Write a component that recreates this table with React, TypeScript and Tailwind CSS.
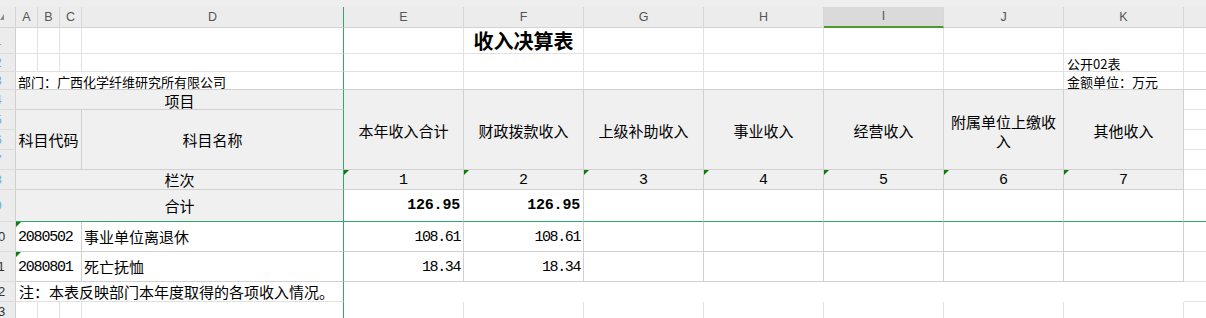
import React from 'react';

// excel-ish sheet: 收入决算表
const CJK = "font-['Noto_Sans_CJK_SC',sans-serif]";
const MONO = "font-['Liberation_Mono','Noto_Sans_CJK_SC',monospace]";

const light = 'border-r border-b border-r-[#e1e1e1] border-b-[#e1e1e1]';
const lightD = 'border-r border-b border-r-[#35a56f] border-b-[#e1e1e1]';
const tbl = 'border-r border-b border-r-[#d0d0d0] border-b-[#d0d0d0] bg-[#f0f0f0]';
const tblD = 'border-r border-b border-r-[#35a56f] border-b-[#d0d0d0] bg-[#f0f0f0]';
const edge = 'border-b border-b-[#e1e1e1]';

const LETTERS = ['A', 'B', 'C', 'D', 'E', 'F', 'G', 'H', 'I', 'J', 'K'];
const HEADS = ['本年收入合计', '财政拨款收入', '上级补助收入', '事业收入', '经营收入', '附属单位上缴收入', '其他收入'];

const Tri = () => (
  <div className="absolute left-0 top-0 w-0 h-0 border-t-[5px] border-r-[5px] border-t-[#0b7d0b] border-r-transparent" />
);

function RowNum({ n }: { n: number }) {
  return (
    <div className="overflow-hidden flex items-center bg-[#ececec] border-r border-b border-r-[#d0d0d0] border-b-[#dcdcdc]">
      <div
        className={`shrink-0 w-[32px] -ml-[18px] text-center text-[13px] font-['Liberation_Sans',sans-serif] ${
          n < 10 ? 'text-[#6aaee0]' : 'text-[#333]'
        }`}
      >
        {n}
      </div>
    </div>
  );
}

function Empty({ n }: { n: number }) {
  return (
    <>
      {Array.from({ length: n }).map((_, i) => (
        <div key={i} className={light} />
      ))}
    </>
  );
}

export default function App() {
  return (
    <div className={`w-[1206px] h-[318px] overflow-hidden bg-white text-black ${CJK}`}>
      <div className="grid w-[1207px] grid-cols-[16px_22px_22px_22px_262px_120px_120px_120px_120px_120px_120px_120px_23px] grid-rows-[7px_21px_26px_18px_18px_20px_20px_20px_20px_20px_32px_30px_30px_20px_20px]">
        {/* top strip */}
        <div className="col-span-13 bg-[#eeeeee]" />

        {/* column letters */}
        <div className="relative bg-[#ececec] border-r border-b border-r-[#d4d4d4] border-b-[#d4d4d4]">
          <div className="absolute left-0 top-[7px] w-0 h-0 border-b-[6px] border-l-[4px] border-b-[#8a8a8a] border-l-transparent" />
        </div>
        {LETTERS.map((l) => (
          <div
            key={l}
            className={`flex items-center justify-center text-[12.5px] text-[#555] font-['Liberation_Sans',sans-serif] border-r ${
              l === 'I'
                ? 'bg-[#dadada] border-b-2 border-b-[#4a9b2e] border-r-[#d8d8d8]'
                : l === 'D'
                ? 'bg-[#ececec] border-b border-b-[#d4d4d4] border-r-[#35a56f]'
                : 'bg-[#ececec] border-b border-b-[#d4d4d4] border-r-[#d8d8d8]'
            }`}
          >
            {l}
          </div>
        ))}
        <div className="bg-[#ececec] border-b border-b-[#d4d4d4]" />

        {/* row 1 */}
        <RowNum n={1} />
        <Empty n={3} />
        <div className={lightD} />
        <div className={light} />
        <div className={`${light} flex items-center justify-center text-[20px] font-bold leading-none`}>收入决算表</div>
        <Empty n={5} />
        <div className={edge} />

        {/* row 2 */}
        <RowNum n={2} />
        <Empty n={3} />
        <div className={lightD} />
        <Empty n={6} />
        <div className={`${light} flex items-end pl-[3px] text-[13px] leading-[14px] whitespace-nowrap`}>公开02表</div>
        <div className={edge} />

        {/* row 3 */}
        <RowNum n={3} />
        <div className="col-span-4 flex items-end pl-[2px] text-[13px] leading-[14px] whitespace-nowrap border-r border-b border-r-[#35a56f] border-b-[#d0d0d0]">
          部门：广西化学纤维研究所有限公司
        </div>
        {Array.from({ length: 6 }).map((_, i) => (
          <div key={i} className="border-r border-b border-r-[#e1e1e1] border-b-[#d0d0d0]" />
        ))}
        <div className="flex items-end pl-[3px] text-[13px] leading-[14px] whitespace-nowrap border-r border-b border-r-[#e1e1e1] border-b-[#d0d0d0]">
          金额单位：万元
        </div>
        <div className="border-b border-b-[#d0d0d0]" />

        {/* rows 4-7 header */}
        <RowNum n={4} />
        <div className={`${tblD} col-span-4 flex items-center justify-center pt-[2px] text-[15px] leading-none`}>项目</div>
        {HEADS.map((h) => (
          <div
            key={h}
            className={`${tbl} row-span-4 flex items-center justify-center px-[5px] pt-[2px] text-center text-[15px] leading-[19px]`}
          >
            {h}
          </div>
        ))}
        <div className={edge} />

        <RowNum n={5} />
        <div className={`${tbl} col-span-3 row-span-3 flex items-center justify-center text-[15px] leading-none whitespace-nowrap`}>
          科目代码
        </div>
        <div className={`${tblD} row-span-3 flex items-center justify-center text-[15px] leading-none`}>科目名称</div>
        <div className={edge} />

        <RowNum n={6} />
        <div className={edge} />

        <RowNum n={7} />
        <div className={edge} />

        {/* row 8 栏次 */}
        <RowNum n={8} />
        <div className={`${tblD} col-span-4 flex items-center justify-center text-[15px] leading-none`}>栏次</div>
        {[1, 2, 3, 4, 5, 6, 7].map((n) => (
          <div key={n} className={`${tbl} relative flex items-center justify-center pt-[2px] text-[15px] leading-none ${MONO}`}>
            <Tri />
            {n}
          </div>
        ))}
        <div className={edge} />

        {/* row 9 合计 */}
        <RowNum n={9} />
        <div className="col-span-4 flex items-center justify-center text-[15px] leading-none bg-[#f0f0f0] border-r border-b border-r-[#35a56f] border-b-[#35a56f]">
          合计
        </div>
        {['126.95', '126.95', '', '', '', '', ''].map((v, i) => (
          <div
            key={i}
            className={`flex items-center justify-end pr-[3px] text-[15px] font-bold tracking-[-0.2px] leading-none border-r border-b border-r-[#d0d0d0] border-b-[#35a56f] ${MONO}`}
          >
            {v}
          </div>
        ))}
        <div className="border-b border-b-[#35a56f]" />

        {/* rows 10-11 data */}
        {[
          { n: 10, code: '2080502', name: '事业单位离退休', a: '108.61', b: '108.61' },
          { n: 11, code: '2080801', name: '死亡抚恤', a: '18.34', b: '18.34' },
        ].map((r) => (
          <React.Fragment key={r.n}>
            <RowNum n={r.n} />
            <div
              className={`relative col-span-3 flex items-center pl-[2px] pt-[1px] text-[15px] tracking-[-1.2px] leading-none border-r border-b border-r-[#d0d0d0] border-b-[#d0d0d0] ${MONO}`}
            >
              <Tri />
              {r.code}
            </div>
            <div className="flex items-center pl-[2px] text-[15px] leading-none border-r border-b border-r-[#35a56f] border-b-[#d0d0d0]">
              {r.name}
            </div>
            {[r.a, r.b, '', '', '', '', ''].map((v, i) => (
              <div
                key={i}
                className={`flex items-center justify-end pr-[3px] pt-[1px] text-[15px] tracking-[-1.4px] leading-none border-r border-b border-r-[#d0d0d0] border-b-[#d0d0d0] ${MONO}`}
              >
                {v}
              </div>
            ))}
            <div className="border-b border-b-[#e1e1e1]" />
          </React.Fragment>
        ))}

        {/* row 12 note */}
        <RowNum n={12} />
        <div className="col-span-4 flex items-center pl-[3px] text-[15px] leading-none whitespace-nowrap border-r border-b border-r-[#35a56f] border-b-[#e1e1e1]">
          注：本表反映部门本年度取得的各项收入情况。
        </div>
        <div className="col-span-7" />
        <div className={edge} />

        {/* row 13 */}
        <RowNum n={13} />
        <Empty n={3} />
        <div className={lightD} />
        <Empty n={7} />
        <div className={edge} />
      </div>
    </div>
  );
}
